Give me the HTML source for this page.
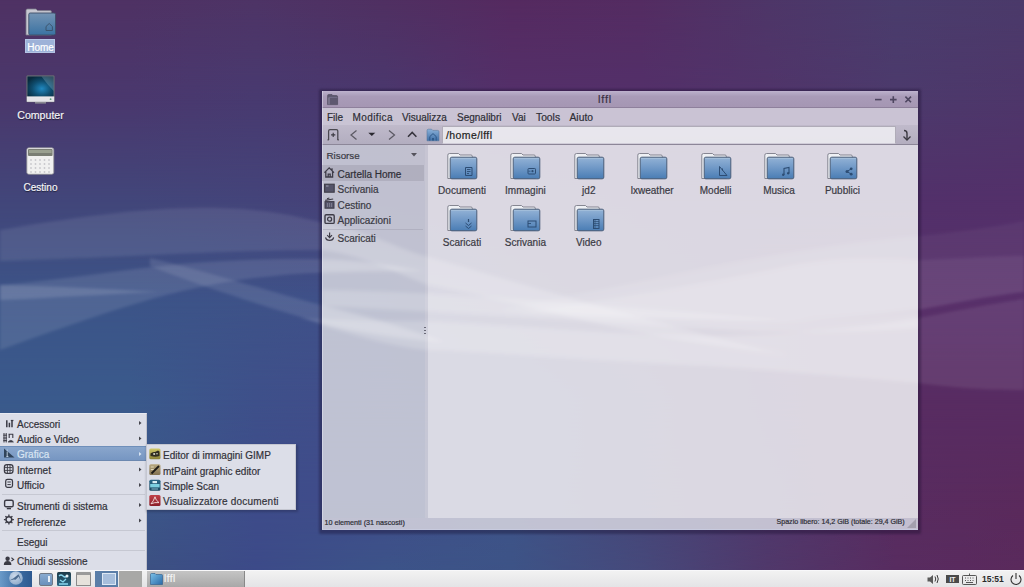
<!DOCTYPE html>
<html><head><meta charset="utf-8">
<style>
*{margin:0;padding:0;box-sizing:border-box}
html,body{width:1024px;height:587px;overflow:hidden}
body{position:relative;font-family:"Liberation Sans",sans-serif;font-size:10px;color:#3c3c3c;background:#4f3262}
.abs{position:absolute}
#wall{position:absolute;left:0;top:0;width:1024px;height:587px}
.t{position:absolute;white-space:nowrap;line-height:1;-webkit-text-stroke:0.2px currentColor}
</style></head><body>
<svg id="wall" width="1024" height="587" viewBox="0 0 1024 587">
<defs>
<filter id="bl" x="-20%" y="-50%" width="140%" height="200%"><feGaussianBlur stdDeviation="1.6"/></filter>
</defs>
<defs>
<linearGradient id="row0" gradientUnits="userSpaceOnUse" x1="0" y1="0" x2="1024" y2="0"><stop offset="0.0000" stop-color="#4f3264"/><stop offset="0.1250" stop-color="#4f3264"/><stop offset="0.2500" stop-color="#4e3466"/><stop offset="0.3750" stop-color="#503062"/><stop offset="0.5000" stop-color="#552a60"/><stop offset="0.6250" stop-color="#542c62"/><stop offset="0.7500" stop-color="#4e3668"/><stop offset="0.8750" stop-color="#4a3c6c"/><stop offset="1.0000" stop-color="#4b3a6a"/></linearGradient>
<linearGradient id="row1" gradientUnits="userSpaceOnUse" x1="0" y1="0" x2="1024" y2="0"><stop offset="0.0000" stop-color="#4a386c"/><stop offset="0.1250" stop-color="#4a386e"/><stop offset="0.2500" stop-color="#483a70"/><stop offset="0.3750" stop-color="#4a386e"/><stop offset="0.5000" stop-color="#54306a"/><stop offset="0.6250" stop-color="#53306a"/><stop offset="0.7500" stop-color="#50346a"/><stop offset="0.8750" stop-color="#4c3a6c"/><stop offset="1.0000" stop-color="#4e366a"/></linearGradient>
<linearGradient id="row2" gradientUnits="userSpaceOnUse" x1="0" y1="0" x2="1024" y2="0"><stop offset="0.0000" stop-color="#42467a"/><stop offset="0.1250" stop-color="#42467a"/><stop offset="0.2500" stop-color="#44447a"/><stop offset="0.3750" stop-color="#484076"/><stop offset="0.5000" stop-color="#4c3a70"/><stop offset="0.6250" stop-color="#50346a"/><stop offset="0.7500" stop-color="#51326a"/><stop offset="0.8750" stop-color="#52306a"/><stop offset="1.0000" stop-color="#53306a"/></linearGradient>
<linearGradient id="row3" gradientUnits="userSpaceOnUse" x1="0" y1="0" x2="1024" y2="0"><stop offset="0.0000" stop-color="#3c5488"/><stop offset="0.1250" stop-color="#3c5488"/><stop offset="0.2500" stop-color="#3e5288"/><stop offset="0.3750" stop-color="#40508a"/><stop offset="0.5000" stop-color="#464878"/><stop offset="0.6250" stop-color="#4e3c72"/><stop offset="0.7500" stop-color="#55326a"/><stop offset="0.8750" stop-color="#58306a"/><stop offset="1.0000" stop-color="#58306a"/></linearGradient>
<linearGradient id="row4" gradientUnits="userSpaceOnUse" x1="0" y1="0" x2="1024" y2="0"><stop offset="0.0000" stop-color="#3a5a8c"/><stop offset="0.1250" stop-color="#3a5a8c"/><stop offset="0.2500" stop-color="#3e508a"/><stop offset="0.3750" stop-color="#424c8a"/><stop offset="0.5000" stop-color="#3e548a"/><stop offset="0.6250" stop-color="#46467a"/><stop offset="0.7500" stop-color="#52346c"/><stop offset="0.8750" stop-color="#582c62"/><stop offset="1.0000" stop-color="#582c62"/></linearGradient>
<linearGradient id="row5" gradientUnits="userSpaceOnUse" x1="0" y1="0" x2="1024" y2="0"><stop offset="0.0000" stop-color="#3b5888"/><stop offset="0.1250" stop-color="#3b5888"/><stop offset="0.2500" stop-color="#3e4c8a"/><stop offset="0.3750" stop-color="#404c8a"/><stop offset="0.5000" stop-color="#3e5488"/><stop offset="0.6250" stop-color="#464678"/><stop offset="0.7500" stop-color="#50386c"/><stop offset="0.8750" stop-color="#582c60"/><stop offset="1.0000" stop-color="#5a2a5c"/></linearGradient>
<linearGradient id="row6" gradientUnits="userSpaceOnUse" x1="0" y1="0" x2="1024" y2="0"><stop offset="0.0000" stop-color="#3c5080"/><stop offset="0.1250" stop-color="#3c5080"/><stop offset="0.2500" stop-color="#3c4a88"/><stop offset="0.3750" stop-color="#3b5588"/><stop offset="0.5000" stop-color="#3d5386"/><stop offset="0.6250" stop-color="#464a7c"/><stop offset="0.7500" stop-color="#50386a"/><stop offset="0.8750" stop-color="#582c60"/><stop offset="1.0000" stop-color="#5a2a5c"/></linearGradient>
<linearGradient id="vf" x1="0" y1="0" x2="0" y2="1"><stop offset="0" stop-color="#fff" stop-opacity="0"/><stop offset="1" stop-color="#fff" stop-opacity="1"/></linearGradient>
<mask id="vmask" maskContentUnits="objectBoundingBox"><rect width="1" height="1" fill="url(#vf)"/></mask>
</defs>
<rect x="0" y="0" width="1024" height="100" fill="url(#row0)"/>
<rect x="0" y="0" width="1024" height="100" fill="url(#row1)" mask="url(#vmask)"/>
<rect x="0" y="100" width="1024" height="100" fill="url(#row1)"/>
<rect x="0" y="100" width="1024" height="100" fill="url(#row2)" mask="url(#vmask)"/>
<rect x="0" y="200" width="1024" height="100" fill="url(#row2)"/>
<rect x="0" y="200" width="1024" height="100" fill="url(#row3)" mask="url(#vmask)"/>
<rect x="0" y="300" width="1024" height="100" fill="url(#row3)"/>
<rect x="0" y="300" width="1024" height="100" fill="url(#row4)" mask="url(#vmask)"/>
<rect x="0" y="400" width="1024" height="100" fill="url(#row4)"/>
<rect x="0" y="400" width="1024" height="100" fill="url(#row5)" mask="url(#vmask)"/>
<rect x="0" y="500" width="1024" height="87" fill="url(#row5)"/>
<rect x="0" y="500" width="1024" height="87" fill="url(#row6)" mask="url(#vmask)"/>

<g filter="url(#bl)" fill="#ffffff">
<!-- R1 arc + dive -->
<path d="M0 230 C70 218 150 206 220 208 C280 210 300 218 330 224 C380 236 400 250 428 257 C500 277 640 320 787 355 C700 345 620 330 571 317 C520 305 470 293 428 285 C390 270 360 255 322 250 C220 250 120 258 0 261 Z" fill-opacity="0.085"/>
<!-- L_C rising -->
<path d="M0 285 C60 280 120 270 180 264 C240 259 300 258 340 260 C370 262 395 266 425 271 C395 271 365 271 340 272 C250 274 190 288 145 301 C100 314 50 332 0 350 Z" fill-opacity="0.10"/>
<!-- F streak -->
<path d="M0 285 C50 286 110 289 160 292 C110 294 50 298 0 300 Z" fill-opacity="0.13"/>
<!-- L3 diagonal -->
<path d="M150 258 C210 272 280 295 340 310 C380 320 410 330 445 342 C410 340 370 334 330 326 C260 305 200 286 150 266 Z" fill-opacity="0.10"/>
<!-- W3 band -->
<path d="M322 290 C450 292 600 305 760 318 C820 322 870 318 918 312 L918 328 C860 332 800 332 760 332 C600 322 450 312 322 306 Z" fill-opacity="0.08"/>
<!-- faint upper arc -->
<path d="M500 310 C650 280 800 245 918 236 C960 232 1000 226 1024 221 L1024 256 C1000 256 970 258 918 260 C880 258 840 256 787 266 C700 285 600 300 520 312 Z" fill-opacity="0.045"/>
<!-- W2 right arc -->
<path d="M520 312 C600 300 700 285 787 266 C840 256 880 258 918 260 C970 258 1000 256 1024 256 L1024 292 C990 296 950 304 918 310 C850 320 780 322 720 320 C650 318 580 316 520 312 Z" fill-opacity="0.10"/>
<!-- W4 lower broad -->
<path d="M300 318 C350 320 390 322 428 321 C550 328 640 336 715 336 C800 334 880 326 918 318 C960 310 1000 302 1024 299 L1024 390 C980 390 950 387 918 383 C800 372 720 366 667 364 C560 358 480 352 428 350 C380 345 340 330 300 318 Z" fill-opacity="0.08"/>
</g>

</svg>


<!-- WINDOW -->
<div class="abs" style="left:319px;top:89px;width:602px;height:445px;border-radius:2px;background:rgba(20,10,40,0.35);filter:blur(1px)"></div>
<div id="win" class="abs" style="left:322px;top:91px;width:596px;height:439px;overflow:hidden">
  <!-- title bar -->
  <div class="abs" style="left:0;top:0;width:596px;height:16px;background:linear-gradient(#b8adc8,#a99bb8 30%,#a596b3);border-top:1px solid #bcb0cc"></div>
  <div class="abs" style="left:0;top:16px;width:596px;height:1px;background:#8e809c"></div>
  <!-- menubar -->
  <div class="abs" style="left:0;top:17px;width:596px;height:17px;background:rgba(222,218,230,0.88)"></div>
  <!-- toolbar -->
  <div class="abs" style="left:0;top:34px;width:596px;height:19px;background:linear-gradient(rgba(214,210,222,0.86),rgba(196,192,206,0.88))"></div>
  <div class="abs" style="left:0;top:53px;width:596px;height:1px;background:rgba(150,145,160,0.9)"></div>
  <!-- sidebar -->
  <div class="abs" style="left:0;top:54px;width:103px;height:373px;background:rgba(228,230,238,0.80)"></div>
  <div class="abs" style="left:103px;top:54px;width:3px;height:373px;background:rgba(224,224,232,0.86)"></div>
  <!-- content -->
  <div class="abs" style="left:106px;top:54px;width:490px;height:373px;background:rgba(243,242,247,0.87)"></div>
  <!-- status bar -->
  <div class="abs" style="left:0;top:427px;width:596px;height:12px;background:rgba(214,214,226,0.88)"></div>
  <div class="abs" style="left:0;top:0;width:1px;height:439px;background:rgba(230,230,245,0.5)"></div>
  <div class="abs" style="left:0;top:438px;width:596px;height:1px;background:rgba(200,204,225,0.8)"></div>
</div>

<svg class="abs" style="left:0;top:0" width="1024" height="587" viewBox="0 0 1024 587">
<defs><clipPath id="wclip"><rect x="322" y="145" width="596" height="373"/></clipPath>
<filter id="bl2" x="-20%" y="-50%" width="140%" height="200%"><feGaussianBlur stdDeviation="2.2"/></filter></defs>
<g clip-path="url(#wclip)"><g filter="url(#bl2)" fill="#ffffff">
<!-- R1 arc + dive -->
<path d="M0 230 C70 218 150 206 220 208 C280 210 300 218 330 224 C380 236 400 250 428 257 C500 277 640 320 787 355 C700 345 620 330 571 317 C520 305 470 293 428 285 C390 270 360 255 322 250 C220 250 120 258 0 261 Z" fill-opacity="0.170"/>
<!-- L_C rising -->
<path d="M0 285 C60 280 120 270 180 264 C240 259 300 258 340 260 C370 262 395 266 425 271 C395 271 365 271 340 272 C250 274 190 288 145 301 C100 314 50 332 0 350 Z" fill-opacity="0.200"/>
<!-- F streak -->
<path d="M0 285 C50 286 110 289 160 292 C110 294 50 298 0 300 Z" fill-opacity="0.260"/>
<!-- L3 diagonal -->
<path d="M150 258 C210 272 280 295 340 310 C380 320 410 330 445 342 C410 340 370 334 330 326 C260 305 200 286 150 266 Z" fill-opacity="0.200"/>
<!-- W3 band -->
<path d="M322 290 C450 292 600 305 760 318 C820 322 870 318 918 312 L918 328 C860 332 800 332 760 332 C600 322 450 312 322 306 Z" fill-opacity="0.160"/>
<!-- faint upper arc -->
<path d="M500 310 C650 280 800 245 918 236 C960 232 1000 226 1024 221 L1024 256 C1000 256 970 258 918 260 C880 258 840 256 787 266 C700 285 600 300 520 312 Z" fill-opacity="0.090"/>
<!-- W2 right arc -->
<path d="M520 312 C600 300 700 285 787 266 C840 256 880 258 918 260 C970 258 1000 256 1024 256 L1024 292 C990 296 950 304 918 310 C850 320 780 322 720 320 C650 318 580 316 520 312 Z" fill-opacity="0.200"/>
<!-- W4 lower broad -->
<path d="M300 318 C350 320 390 322 428 321 C550 328 640 336 715 336 C800 334 880 326 918 318 C960 310 1000 302 1024 299 L1024 390 C980 390 950 387 918 383 C800 372 720 366 667 364 C560 358 480 352 428 350 C380 345 340 330 300 318 Z" fill-opacity="0.160"/>
</g>
</g></svg>
<svg width="0" height="0" style="position:absolute"><defs>
<linearGradient id="fg" x1="0" y1="0" x2="0" y2="1"><stop offset="0" stop-color="#94b3d6"/><stop offset="0.5" stop-color="#6f98c6"/><stop offset="1" stop-color="#4a7db4"/></linearGradient>
<g id="fold">
<path d="M0.8 2.2Q0.8 0.5 2.5 0.5H11.5L13 2H24Q25.3 2 25.3 3.3V25.5H0.8Z" fill="#eef0f4" stroke="#7a7c88" stroke-width="0.9"/>
<rect x="3.2" y="4.2" width="26.6" height="21.6" rx="1.6" fill="url(#fg)" stroke="#4b5d78" stroke-width="1"/>
<path d="M4.2 5.5h24.6" stroke="#a6c0dc" stroke-width="0.8"/>
</g>
</defs></svg>
<svg class="abs" style="left:447.0px;top:153px" width="31" height="27" viewBox="0 0 31 27"><use href="#fold"/><path d="M18.5 14.5h6.5v8h-6.5z" fill="none" stroke="#2d4d74" stroke-width="1"/><path d="M20 16.5h3.5M20 18.5h3.5M20 20.5h2" stroke="#2d4d74" stroke-width="0.9"/></svg>
<div class="t" style="left:427.0px;top:186.4px;width:70px;text-align:center;font-size:10px;color:#3a3a44">Documenti</div>
<svg class="abs" style="left:510.4px;top:153px" width="31" height="27" viewBox="0 0 31 27"><use href="#fold"/><rect x="18" y="15.5" width="7.5" height="5.5" rx="0.8" fill="none" stroke="#2d4d74" stroke-width="1"/><circle cx="22.5" cy="18.2" r="1.1" fill="#2d4d74"/><path d="M18.5 18.2h2" stroke="#2d4d74" stroke-width="0.8"/></svg>
<div class="t" style="left:490.4px;top:186.4px;width:70px;text-align:center;font-size:10px;color:#3a3a44">Immagini</div>
<svg class="abs" style="left:573.8px;top:153px" width="31" height="27" viewBox="0 0 31 27"><use href="#fold"/></svg>
<div class="t" style="left:553.8px;top:186.4px;width:70px;text-align:center;font-size:10px;color:#3a3a44">jd2</div>
<svg class="abs" style="left:637.2px;top:153px" width="31" height="27" viewBox="0 0 31 27"><use href="#fold"/></svg>
<div class="t" style="left:617.2px;top:186.4px;width:70px;text-align:center;font-size:10px;color:#3a3a44">lxweather</div>
<svg class="abs" style="left:700.6px;top:153px" width="31" height="27" viewBox="0 0 31 27"><use href="#fold"/><path d="M18.5 13.5v9h7.5z" fill="none" stroke="#2d4d74" stroke-width="1"/><path d="M21.5 15.5v2" stroke="#2d4d74" stroke-width="1"/></svg>
<div class="t" style="left:680.6px;top:186.4px;width:70px;text-align:center;font-size:10px;color:#3a3a44">Modelli</div>
<svg class="abs" style="left:764.0px;top:153px" width="31" height="27" viewBox="0 0 31 27"><use href="#fold"/><path d="M20 22v-6.5l5 -1v5.5" fill="none" stroke="#2d4d74" stroke-width="1.1"/><circle cx="19.2" cy="21.8" r="1.2" fill="#2d4d74"/><circle cx="24.2" cy="20.3" r="1.2" fill="#2d4d74"/></svg>
<div class="t" style="left:744.0px;top:186.4px;width:70px;text-align:center;font-size:10px;color:#3a3a44">Musica</div>
<svg class="abs" style="left:827.4px;top:153px" width="31" height="27" viewBox="0 0 31 27"><use href="#fold"/><circle cx="20" cy="18.5" r="1.5" fill="#2d4d74"/><circle cx="24.2" cy="15.8" r="1.4" fill="#2d4d74"/><circle cx="24.2" cy="21.2" r="1.4" fill="#2d4d74"/><path d="M20 18.5L24 16M20 18.5L24 21" stroke="#2d4d74" stroke-width="1"/></svg>
<div class="t" style="left:807.4px;top:186.4px;width:70px;text-align:center;font-size:10px;color:#3a3a44">Pubblici</div>
<svg class="abs" style="left:447.0px;top:205px" width="31" height="27" viewBox="0 0 31 27"><use href="#fold"/><path d="M21.5 14v3" stroke="#2d4d74" stroke-width="1.2"/><path d="M18.5 18l3 2.5 3-2.5M18.5 21l3 2.5 3-2.5" fill="none" stroke="#2d4d74" stroke-width="1"/></svg>
<div class="t" style="left:427.0px;top:238.4px;width:70px;text-align:center;font-size:10px;color:#3a3a44">Scaricati</div>
<svg class="abs" style="left:510.4px;top:205px" width="31" height="27" viewBox="0 0 31 27"><use href="#fold"/><rect x="18" y="16" width="8" height="6" fill="none" stroke="#2d4d74" stroke-width="1"/><path d="M18 18.5h3" stroke="#2d4d74" stroke-width="0.9"/></svg>
<div class="t" style="left:490.4px;top:238.4px;width:70px;text-align:center;font-size:10px;color:#3a3a44">Scrivania</div>
<svg class="abs" style="left:573.8px;top:205px" width="31" height="27" viewBox="0 0 31 27"><use href="#fold"/><rect x="19.5" y="14.5" width="5.5" height="9" fill="none" stroke="#2d4d74" stroke-width="1"/><path d="M19.5 16.5h5.5M19.5 18.5h5.5M19.5 20.5h5.5M21 14.5v9" stroke="#2d4d74" stroke-width="0.7"/></svg>
<div class="t" style="left:553.8px;top:238.4px;width:70px;text-align:center;font-size:10px;color:#3a3a44">Video</div>

<!-- title -->
<svg class="abs" style="left:327px;top:94px" width="12" height="12" viewBox="0 0 12 12"><path d="M0.6 1.6Q0.6 0.6 1.6 0.6H5L6 1.6H9.4Q10.6 1.6 10.6 2.8V10.6H0.6Z" fill="#5e5870" stroke="#4a4458" stroke-width="0.6"/><path d="M2 3.5V10.4" stroke="#8e88a0" stroke-width="1.1"/><path d="M2 3.4h8.4" stroke="#7a7490" stroke-width="0.8"/></svg>
<div class="t" style="left:590px;top:94px;width:30px;text-align:center;font-size:11px;letter-spacing:0.8px;color:#3a3044">lffl</div>
<svg class="abs" style="left:871.5px;top:93.5px" width="45" height="11" viewBox="0 0 45 11">
<path d="M3 5.6h6.6" stroke="#4e4660" stroke-width="1.6"/>
<path d="M18 5.6h6.6M21.3 2.3v6.6" stroke="#4e4660" stroke-width="1.6"/>
<path d="M33.4 2.6l5.6 5.6M39 2.6l-5.6 5.6" stroke="#4e4660" stroke-width="1.6"/>
</svg>
<!-- menubar -->
<div class="t" style="left:327px;top:113px;font-size:10px;color:#2e2e36">File</div>
<div class="t" style="left:352.5px;top:113px;font-size:10px;letter-spacing:0.4px;color:#2e2e36">Modifica</div>
<div class="t" style="left:402px;top:113px;font-size:10px;color:#2e2e36">Visualizza</div>
<div class="t" style="left:457px;top:113px;font-size:10px;color:#2e2e36">Segnalibri</div>
<div class="t" style="left:512px;top:113px;font-size:10px;color:#2e2e36">Vai</div>
<div class="t" style="left:536px;top:113px;font-size:10.3px;color:#2e2e36">Tools</div>
<div class="t" style="left:569.5px;top:113px;font-size:10.3px;color:#2e2e36">Aiuto</div>
<!-- toolbar -->
<svg class="abs" style="left:322px;top:124px" width="100" height="22" viewBox="0 0 100 22">
<path d="M6.6 15.9V7Q6.6 5.6 8 5.6H14.4Q15.8 5.6 15.8 7V15.9" fill="none" stroke="#4a4850" stroke-width="1.25"/>
<path d="M5.4 15.9h1.6M15.4 15.9h1.6" stroke="#4a4850" stroke-width="1"/>
<path d="M11.2 8.8v4.2M9.1 10.9h4.2" stroke="#3a3840" stroke-width="1.1"/>
<path d="M34.5 6.5L29 11 34.5 15.5" fill="none" stroke="#5c5a64" stroke-width="1.25"/>
<path d="M46.3 8.8H53.3L49.8 11.9Z" fill="#2a2830"/>
<path d="M67 6.5L72.5 11 67 15.5" fill="none" stroke="#5c5a64" stroke-width="1.25"/>
<path d="M86 12.8L90.2 8.4 94.4 12.8" fill="none" stroke="#35333c" stroke-width="1.5"/>
</svg>
<svg class="abs" style="left:426px;top:128px" width="14" height="14" viewBox="0 0 14 14">
<defs><linearGradient id="thg" x1="0" y1="0" x2="0" y2="1"><stop offset="0" stop-color="#8ab0d8"/><stop offset="1" stop-color="#3f70a8"/></linearGradient></defs>
<path d="M1 2.6Q1 1.2 2.4 1.2H5.6L6.8 2.4H11.6Q13 2.4 13 3.8V12.8H1Z" fill="url(#thg)" stroke="#5a7aa0" stroke-width="0.6"/>
<path d="M3.8 12.6V8.6L7 5.6 10.2 8.6V12.6" fill="none" stroke="#2e5888" stroke-width="1"/>
<path d="M6 12.6V10H8V12.6" fill="#2e5888"/>
</svg>
<div class="abs" style="left:442px;top:126px;width:454px;height:18px;background:rgba(236,234,240,0.92);border:1px solid rgba(170,166,178,0.9);border-bottom-color:#d0ccd8;border-radius:1px"></div>
<div class="t" style="left:446px;top:129.5px;font-size:10.5px;letter-spacing:0.4px;color:#222">/home/lffl</div>
<svg class="abs" style="left:900px;top:128px" width="12" height="14" viewBox="0 0 12 14"><path d="M4 2.5Q7 2.5 7 5.5V11" fill="none" stroke="#3a3840" stroke-width="1.4"/><path d="M3.5 8.5l3.5 3.5 3.5-3.5" fill="none" stroke="#3a3840" stroke-width="1.3"/></svg>
<!-- sidebar -->
<div class="t" style="left:326.5px;top:151px;font-size:9.8px;color:#3a3a44">Risorse</div>
<svg class="abs" style="left:410px;top:152px" width="8" height="6" viewBox="0 0 8 6"><path d="M1 1h6l-3 3.5z" fill="#55535c"/></svg>
<div class="abs" style="left:322px;top:165px;width:102px;height:16px;background:rgba(150,148,164,0.38)"></div>
<svg class="abs" style="left:323px;top:166px" width="14" height="80" viewBox="0 0 14 80">
<g fill="none" stroke="#3e3c48">
<path d="M1.4 6.6L6.2 1.8 11 6.6M2.8 5.4V11H9.6V5.4M5.2 11V8.2H7.2V11M9 2.2v2.4" stroke-width="1.3"/>
<rect x="1.6" y="18.2" width="9.6" height="8" fill="#55546a" stroke-width="1.1"/>
<path d="M2.2 34.4l8-1.4M4 32.8l2.4-0.8" stroke-width="1.2"/>
<rect x="2" y="35.6" width="9" height="6.6" fill="#55546a" stroke-width="1"/>
<rect x="2" y="48.8" width="9.2" height="8.6" rx="1.2" stroke-width="1.4"/>
<circle cx="6.6" cy="53.2" r="2" stroke-width="1.3"/>
<path d="M6.6 66.4v5M4.2 69.2l2.4 2.4 2.4-2.4M2.6 71.4q0.4 3 4 3 3.6 0 4-3" stroke-width="1.2"/>
</g>
<path d="M3 20h2.5" stroke="#b8b8c8" stroke-width="0.8"/>
<path d="M4.6 37v4M6.6 37v4M8.6 37v4" stroke="#9a9aaa" stroke-width="0.6"/>
</svg>
<div class="t" style="left:337.5px;top:170px;font-size:10px;color:#2e2e36">Cartella Home</div>
<div class="t" style="left:337.5px;top:185px;font-size:10px;color:#3a3a44">Scrivania</div>
<div class="t" style="left:337.5px;top:200.5px;font-size:10px;color:#3a3a44">Cestino</div>
<div class="t" style="left:337.5px;top:216px;font-size:10px;color:#3a3a44">Applicazioni</div>
<div class="abs" style="left:323px;top:229px;width:100px;height:1px;background:rgba(160,160,175,0.5)"></div>
<div class="t" style="left:337.5px;top:234px;font-size:10px;color:#3a3a44">Scaricati</div>
<div class="abs" style="left:424px;top:327px;width:2px;height:9px;background:repeating-linear-gradient(#6a6a78 0 1px,transparent 1px 3px)"></div>
<!-- status -->
<div class="t" style="left:324.5px;top:519.3px;font-size:7.2px;color:#2e2e36">10 elementi (31 nascosti)</div>
<div class="t" style="left:776.5px;top:519.3px;font-size:7.1px;color:#2e2e36">Spazio libero: 14,2 GiB (totale: 29,4 GiB)</div>
<svg class="abs" style="left:906px;top:518px" width="11" height="11" viewBox="0 0 11 11"><path d="M10 1L1 10h9z" fill="rgba(150,145,160,0.7)"/></svg>



<!-- DESKTOP ICONS -->
<svg class="abs" style="left:25px;top:8px" width="32" height="28" viewBox="0 0 32 28">
<path d="M1 2.6Q1 1 2.6 1H11L12.6 2.6H25Q26.5 2.6 26.5 4V27H1Z" fill="#c8c8d2" stroke="#7a7a88" stroke-width="0.8"/>
<rect x="3.8" y="5" width="26.7" height="22" rx="1.4" fill="url(#hg)" stroke="#3e4e68" stroke-width="0.9"/>
<path d="M21 22.5v-4l3.2-3 3.2 3v4z" fill="none" stroke="#3a5068" stroke-width="0.9"/>
</svg>
<svg width="0" height="0" style="position:absolute"><defs>
<linearGradient id="hg" x1="0" y1="0" x2="0" y2="1"><stop offset="0" stop-color="#7594b4"/><stop offset="1" stop-color="#3a72a2"/></linearGradient>
<radialGradient id="scr" cx="0.55" cy="0.6" r="0.65"><stop offset="0" stop-color="#2088c0"/><stop offset="0.55" stop-color="#0f4e70"/><stop offset="1" stop-color="#082a3c"/></radialGradient>
</defs></svg>
<div class="abs" style="left:25px;top:39px;width:30px;height:14px;background:#9db2d8;border:1px solid #b4c4e4"></div>
<div class="t" style="left:10.5px;top:43px;width:60px;text-align:center;font-size:10px;color:#fff">Home</div>

<svg class="abs" style="left:26px;top:75px" width="30" height="30" viewBox="0 0 30 30">
<rect x="0.6" y="0.6" width="27.8" height="26.4" rx="0.8" fill="#7c7c88" stroke="#5a5a66" stroke-width="0.6"/>
<rect x="1.4" y="1.4" width="26.2" height="20.4" fill="url(#scr)"/>
<path d="M15.5 1.4H27.6V16Q21 9 15.5 1.4Z" fill="#cfe6f4" fill-opacity="0.22"/>
<rect x="0.8" y="21.8" width="27.4" height="5" fill="#e4e4e8"/>
<path d="M0.8 21.8h27.4" stroke="#f8f8fa" stroke-width="0.6"/>
<circle cx="24.6" cy="24.2" r="0.9" fill="#5aa07a"/>
<rect x="9" y="27" width="11" height="1.6" fill="#8a8a92"/>
</svg>
<div class="t" style="left:5.5px;top:110px;width:70px;text-align:center;font-size:10.6px;color:#f4f4f8;text-shadow:0 1px 1px rgba(0,0,0,0.6)">Computer</div>

<svg class="abs" style="left:26px;top:147px" width="29" height="29" viewBox="0 0 29 29">
<rect x="0.8" y="0.8" width="27" height="26.5" rx="2" fill="#f0f0f0" stroke="#8a8a90" stroke-width="0.8"/>
<rect x="2" y="2" width="24.6" height="7" rx="1" fill="#7a7e74"/>
<rect x="3" y="3" width="22.6" height="3" fill="#9aa090"/>
<g fill="#c8c8cc"><circle cx="5" cy="13" r="0.9"/><circle cx="9.5" cy="13" r="0.9"/><circle cx="14" cy="13" r="0.9"/><circle cx="18.5" cy="13" r="0.9"/><circle cx="23" cy="13" r="0.9"/>
<circle cx="5" cy="17" r="0.9"/><circle cx="9.5" cy="17" r="0.9"/><circle cx="14" cy="17" r="0.9"/><circle cx="18.5" cy="17" r="0.9"/><circle cx="23" cy="17" r="0.9"/>
<circle cx="5" cy="21" r="0.9"/><circle cx="9.5" cy="21" r="0.9"/><circle cx="14" cy="21" r="0.9"/><circle cx="18.5" cy="21" r="0.9"/><circle cx="23" cy="21" r="0.9"/>
<circle cx="5" cy="25" r="0.9"/><circle cx="9.5" cy="25" r="0.9"/><circle cx="14" cy="25" r="0.9"/><circle cx="18.5" cy="25" r="0.9"/><circle cx="23" cy="25" r="0.9"/></g>
</svg>
<div class="t" style="left:5.5px;top:182.6px;width:70px;text-align:center;font-size:10px;color:#f4f4f8;text-shadow:0 1px 1px rgba(0,0,0,0.6)">Cestino</div>


<!-- MENU -->
<div class="abs" style="left:0;top:413px;width:147px;height:157px;background:#dcdee8;border-right:1px solid #c0c2cc;border-top:1px solid #e8eaf2"></div>
<div class="abs" style="left:0;top:446px;width:146px;height:15px;background:linear-gradient(#8aa6cc,#7696c2);border-top:1px solid #6f8fba;border-bottom:1px solid #6c88b0"></div>
<div class="abs" style="left:2px;top:494px;width:143px;height:1px;background:#c6c8d2"></div>
<div class="abs" style="left:2px;top:530px;width:143px;height:1px;background:#c6c8d2"></div>
<div class="abs" style="left:2px;top:550px;width:143px;height:1px;background:#c6c8d2"></div>
<div class="t" style="left:17px;top:419.5px;font-size:10px;color:#32323a">Accessori</div>
<div class="t" style="left:17px;top:435px;font-size:10px;color:#32323a">Audio e Video</div>
<div class="t" style="left:17px;top:450px;font-size:10px;color:#d8e4f2">Grafica</div>
<div class="t" style="left:17px;top:466px;font-size:10px;color:#32323a">Internet</div>
<div class="t" style="left:17px;top:481px;font-size:10px;color:#32323a">Ufficio</div>
<div class="t" style="left:17px;top:502px;font-size:10px;color:#32323a">Strumenti di sistema</div>
<div class="t" style="left:17px;top:517.5px;font-size:10px;color:#32323a">Preferenze</div>
<div class="t" style="left:17px;top:537.5px;font-size:10px;color:#32323a">Esegui</div>
<div class="t" style="left:17px;top:557px;font-size:10px;color:#32323a">Chiudi sessione</div>
<svg class="abs" style="left:138px;top:418px" width="5" height="110" viewBox="0 0 5 110">
<path d="M1 3l2.5 2-2.5 2z" fill="#44444c"/><path d="M1 18.5l2.5 2-2.5 2z" fill="#44444c"/><path d="M1 34l2.5 2-2.5 2z" fill="#d8e4f2"/>
<path d="M1 49.5l2.5 2-2.5 2z" fill="#44444c"/><path d="M1 65l2.5 2-2.5 2z" fill="#44444c"/><path d="M1 85l2.5 2-2.5 2z" fill="#44444c"/><path d="M1 100.5l2.5 2-2.5 2z" fill="#44444c"/>
</svg>
<svg class="abs" style="left:3px;top:416px" width="12" height="152" viewBox="0 0 12 152">
<g fill="none" stroke="#3a3a44">
<path d="M3.8 4.2v7M6.4 6.8v4.4M9 5v6.2" stroke-width="1.5"/><path d="M7.8 4.5h2.6" stroke-width="1.2"/>
<path d="M1 17v9.5M3.2 17v9.5M0.3 19.2h3.6M0.3 22h3.6M0.3 24.6h3.6" stroke-width="1"/><path d="M5.5 18.2h4.8M6.2 18v4M9.8 18v4" stroke-width="1.1"/><path d="M5.2 26q2.6-3.2 5.2 0z" fill="#3a3a44" stroke-width="0.8"/>
<rect x="1.4" y="48.6" width="8.6" height="8.8" rx="2.6" stroke-width="1.25"/><path d="M2 51.6h7.4M2 54.4h7.4M4.4 49v8M7 49v8" stroke-width="0.9"/>
<rect x="2.7" y="63.4" width="6.8" height="8" rx="1.8" stroke-width="1.25"/><path d="M4.4 66h3.4M4.4 68.6h3.4" stroke-width="1"/>
<rect x="1.6" y="84.2" width="8.6" height="6.6" rx="1.6" stroke-width="1.4"/><path d="M3.8 92.6h4.2" stroke-width="1.4"/>
<circle cx="5.9" cy="103.6" r="2.9" stroke-width="1.5"/><path d="M5.9 98.6v1.8M5.9 106.8v1.8M0.9 103.6h1.8M9.1 103.6h1.8M2.4 100.1l1.2 1.2M8.2 105.9l1.2 1.2M2.4 107.1l1.2-1.2M8.2 101.3l1.2-1.2" stroke-width="1.3"/>
</g>
<circle cx="4.6" cy="142.8" r="2.2" fill="#3a3a44"/><path d="M0.8 149q0-4 3.8-4q3.8 0 3.8 4z" fill="#3a3a44"/><path d="M8.4 141.8l2.2 1.6-2.2 1.6" fill="none" stroke="#3a3a44" stroke-width="1.1"/>
</svg>
<svg class="abs" style="left:3px;top:447px" width="12" height="13" viewBox="0 0 12 13"><path d="M1 10.5V1.5L11.5 10.5Z" fill="#223448" fill-opacity="0.85"/><path d="M4.2 4.5v5M3.4 9.5h2" stroke="#c8d8ea" stroke-width="0.9"/><circle cx="4.2" cy="3.2" r="0.6" fill="#c8d8ea"/></svg>

<!-- SUBMENU -->
<div class="abs" style="left:146px;top:445px;width:152px;height:67px;background:rgba(20,20,40,0.25);filter:blur(1.2px)"></div>
<div class="abs" style="left:146px;top:444px;width:150px;height:66px;background:#dcdee8;border:1px solid #c4c6d0"></div>
<div class="t" style="left:163px;top:451px;font-size:10px;color:#32323a">Editor di immagini GIMP</div>
<div class="t" style="left:163px;top:466.5px;font-size:10px;color:#32323a">mtPaint graphic editor</div>
<div class="t" style="left:163px;top:481.5px;font-size:10px;color:#32323a">Simple Scan</div>
<div class="t" style="left:163px;top:497px;font-size:10px;color:#32323a;letter-spacing:0.2px">Visualizzatore documenti</div>
<svg class="abs" style="left:149px;top:448px" width="12" height="60" viewBox="0 0 12 60">
<defs><linearGradient id="gimpg" x1="0" y1="0" x2="0" y2="1"><stop offset="0" stop-color="#d0c868"/><stop offset="1" stop-color="#8a8238"/></linearGradient>
<linearGradient id="mtg" x1="0" y1="0" x2="0" y2="1"><stop offset="0" stop-color="#b8a880"/><stop offset="1" stop-color="#807050"/></linearGradient>
<linearGradient id="scg" x1="0" y1="0" x2="0" y2="1"><stop offset="0" stop-color="#2a6888"/><stop offset="1" stop-color="#1a4860"/></linearGradient>
<linearGradient id="pdg" x1="0" y1="0" x2="0" y2="1"><stop offset="0" stop-color="#c04048"/><stop offset="1" stop-color="#8a1e28"/></linearGradient></defs>
<rect x="0.3" y="0.5" width="11.2" height="10.8" rx="1.5" fill="url(#gimpg)"/><path d="M1.5 5.5q2-2 4.5-1.5l3-1.5 1.5 1v4.5q-4 1.5-9 0z" fill="#2e2c20"/><circle cx="5.2" cy="6" r="1.1" fill="#d8d8c8"/><circle cx="8" cy="5.8" r="0.8" fill="#d8d8c8"/>
<rect x="0.3" y="16.3" width="11.2" height="10.8" rx="1.5" fill="url(#mtg)"/><path d="M1.8 19h3M1.8 21.5h3" stroke="#e8e0c0" stroke-width="0.9"/><path d="M2.5 25.5l7.5-7.5" stroke="#1e1c18" stroke-width="1.8"/>
<rect x="0.3" y="31.8" width="11.2" height="11" rx="1.5" fill="url(#scg)"/><rect x="1.2" y="36" width="9.4" height="3.4" fill="#7cd0e0"/><rect x="3.5" y="33" width="4.5" height="2.2" fill="#d8eef4"/><path d="M2.5 41h6.5" stroke="#a8d8e8" stroke-width="0.8"/>
<rect x="0.3" y="47" width="11.2" height="11" rx="1.5" fill="url(#pdg)"/><path d="M2 55.8q2.5-2.5 4-7q0.4 3.2 4 5.8q-4.5-0.5-8 1.2z" fill="none" stroke="#f4e0e0" stroke-width="0.9"/>
</svg>


<!-- PANEL -->
<div class="abs" style="left:0;top:570px;width:1024px;height:17px;background:linear-gradient(#f2f2f2,#e4e4e6);border-top:1px solid #f8f8fa"></div>
<div class="abs" style="left:0;top:571px;width:32px;height:16px;background:linear-gradient(90deg,#6a9ac8,#3a6aa0 60%,#2e5a90)"></div>
<svg class="abs" style="left:8px;top:570px" width="17" height="17" viewBox="0 0 17 17">
<defs><radialGradient id="lgo" cx="0.4" cy="0.35" r="0.7"><stop offset="0" stop-color="#e4ecf6"/><stop offset="1" stop-color="#9ab4d0"/></radialGradient></defs>
<circle cx="8" cy="8" r="6.8" fill="url(#lgo)" fill-opacity="0.85"/>
<path d="M1.5 10.5L5.5 8.2 10.5 4.2Q12.2 6.5 13 11.5L10.8 6.6 7.6 9.8 5.8 9.4Z" fill="#3a5a80" fill-opacity="0.85"/>
</svg>
<div class="abs" style="left:39px;top:572.5px;width:14px;height:13.5px;background:linear-gradient(#8aacd0,#6a90bc);border:1.5px solid #707884;border-radius:2px"></div><div class="abs" style="left:48px;top:576px;width:2px;height:6px;background:#e8f0f8"></div>
<div class="abs" style="left:57px;top:571.5px;width:14px;height:14px;background:linear-gradient(#1e3a48,#2a6a88);border-radius:1.5px"></div>
<svg class="abs" style="left:57px;top:571.5px" width="14" height="14" viewBox="0 0 14 14"><path d="M2 4q2-2 4 0t4 0M3 8l3 2 3-3M2 12h9" fill="none" stroke="#8ad8f0" stroke-width="1.3"/><circle cx="10" cy="4" r="1.5" fill="#e8f4f8"/></svg>
<div class="abs" style="left:76px;top:572px;width:15px;height:14px;background:#e6e2dc;border:1px solid #8a8a8a;border-top:3px solid #9a9a9a;border-radius:1px"></div>
<div class="abs" style="left:95px;top:571px;width:23px;height:16px;background:#5a7ea8"></div>
<div class="abs" style="left:102px;top:573px;width:14px;height:12px;background:#a6bedc;border:1px solid #dce8f4"></div>
<div class="abs" style="left:119px;top:571px;width:23px;height:16px;background:#a8a8a6"></div>
<div class="abs" style="left:147px;top:571px;width:98px;height:16px;background:linear-gradient(#c4c4c4,#a8a8a8);border-right:1px solid #888"></div>
<svg class="abs" style="left:150px;top:573px" width="13" height="12" viewBox="0 0 13 12"><defs><linearGradient id="tbf" x1="0" y1="0" x2="1" y2="1"><stop offset="0" stop-color="#7ac0e8"/><stop offset="1" stop-color="#2a6aa8"/></linearGradient></defs><path d="M0.5 1.5Q0.5 0.5 1.5 0.5H5L6 1.5H11.5Q12.5 1.5 12.5 2.5V11.5H0.5Z" fill="url(#tbf)" stroke="#2a5a8a" stroke-width="0.6"/></svg>
<div class="t" style="left:164px;top:574px;font-size:10px;color:#f4f4f4;letter-spacing:0.5px">lffl</div>
<!-- tray -->
<svg class="abs" style="left:926px;top:573px" width="14" height="12" viewBox="0 0 14 12"><path d="M1.5 4.5h2.5L7 2v9L4 8.5H1.5z" fill="#5a5a5a"/><path d="M9 3.5q1.5 2.5 0 5M11 2q2.5 4 0 8" fill="none" stroke="#3a3a3a" stroke-width="1"/></svg>
<div class="abs" style="left:946px;top:575px;width:13px;height:7.5px;background:#4a4a4a"></div>
<div class="t" style="left:946px;top:575.5px;width:13px;text-align:center;font-size:7px;font-weight:bold;color:#f0f0f0;-webkit-text-stroke:0">IT</div>
<svg class="abs" style="left:962px;top:573px" width="15" height="12" viewBox="0 0 15 12"><rect x="0.5" y="2.5" width="14" height="9" rx="1" fill="none" stroke="#444" stroke-width="0.9"/><path d="M3 5h1M5.5 5h1M8 5h1M10.5 5h1M3 7.5h1M5.5 7.5h1M8 7.5h1M10.5 7.5h1M4 9.5h7M7.5 2.5V0.5" stroke="#444" stroke-width="0.9"/></svg>
<div class="t" style="left:982px;top:575.3px;font-size:8.5px;font-weight:bold;color:#2a2a2a;-webkit-text-stroke:0">15:51</div>
<svg class="abs" style="left:1009px;top:572px" width="14" height="14" viewBox="0 0 14 14"><path d="M4 3.5a5 5 0 1 0 6 0" fill="none" stroke="#333" stroke-width="1.1"/><path d="M7 1v6" stroke="#333" stroke-width="1.1"/></svg>


</body></html>
